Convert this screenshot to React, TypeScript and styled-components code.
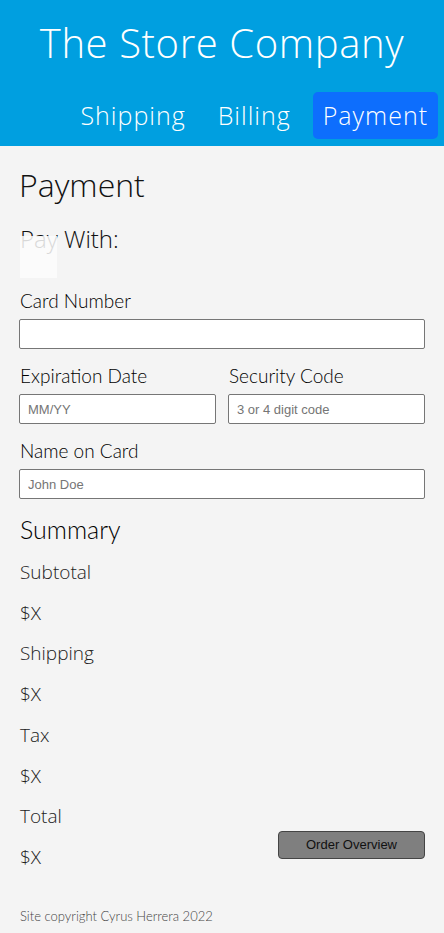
import styled, { createGlobalStyle } from "styled-components";

const GlobalStyle = createGlobalStyle`
  * {
    box-sizing: border-box;
  }
  body {
    margin: 0;
    background-color: #f4f4f4;
    font-family: "Open Sans", "Noto Sans", sans-serif;
    font-weight: 300;
    color: #111;
  }
`;

const summaryRows = [
  { label: "Subtotal", value: "$X" },
  { label: "Shipping", value: "$X" },
  { label: "Tax", value: "$X" },
  { label: "Total", value: "$X" },
];

function App() {
  return (
    <>
      <GlobalStyle />
      <Header>
        <Title>The Store Company</Title>
        <Nav>
          <NavItem>Shipping</NavItem>
          <NavItem>Billing</NavItem>
          <NavItem $active>Payment</NavItem>
        </Nav>
      </Header>
      <Main>
        <PageTitle>Payment</PageTitle>
        <PayWith>
          Pay With:
          <BrokenImage />
        </PayWith>
        <Field>
          <Label>Card Number</Label>
          <Input type="text" />
        </Field>
        <Row>
          <Field>
            <Label>Expiration Date</Label>
            <Input type="text" placeholder="MM/YY" />
          </Field>
          <Field>
            <Label>Security Code</Label>
            <Input type="text" placeholder="3 or 4 digit code" />
          </Field>
        </Row>
        <Field>
          <Label>Name on Card</Label>
          <Input type="text" placeholder="John Doe" />
        </Field>
        <SummaryTitle>Summary</SummaryTitle>
        <SummaryBody>
          <SummaryList>
            {summaryRows.map((row) => (
              <div key={row.label}>
                <SummaryText>{row.label}</SummaryText>
                <SummaryText>{row.value}</SummaryText>
              </div>
            ))}
          </SummaryList>
          <OrderButton type="button">Order Overview</OrderButton>
        </SummaryBody>
        <Footer>Site copyright Cyrus Herrera 2022</Footer>
      </Main>
    </>
  );
}

const Header = styled.header`
  background-color: #009fe0;
  color: #fff;
  height: 146px;
  padding-top: 18px;
`;

const Title = styled.h1`
  margin: 0;
  text-align: center;
  font-size: 40px;
  font-weight: 300;
  line-height: 50px;
  letter-spacing: 0.6px;
`;

const Nav = styled.nav`
  display: flex;
  justify-content: flex-end;
  gap: 12px;
  margin-top: 24px;
  padding-right: 6px;
`;

const NavItem = styled.a<{ $active?: boolean }>`
  display: block;
  padding: 0 10px;
  height: 47px;
  line-height: 46px;
  font-size: 25px;
  font-weight: 300;
  letter-spacing: 1px;
  border-radius: 5px;
  color: #fff;
  background-color: ${(p) => (p.$active ? "#0d6efd" : "transparent")};
`;

const Main = styled.main`
  padding: 0 19px;
`;

const PageTitle = styled.h2`
  margin: 0;
  padding-top: 20px;
  font-size: 32px;
  font-weight: 300;
  line-height: 38px;
`;

const PayWith = styled.h3`
  position: relative;
  margin: 20px 0 0;
  font-size: 24px;
  font-weight: 300;
  line-height: 30px;
  height: 50px;
  padding-left: 1px;
`;

const BrokenImage = styled.span`
  position: absolute;
  left: 1px;
  top: 12px;
  width: 37px;
  height: 42px;
  background-color: rgba(252, 252, 252, 0.85);
`;

const Field = styled.div`
  display: flex;
  flex-direction: column;
  margin-top: 15px;
`;

const Row = styled.div`
  display: grid;
  grid-template-columns: 1fr 1fr;
  gap: 12px;
`;

const Label = styled.label`
  font-family: "Lato", "Liberation Sans", sans-serif;
  font-weight: 300;
  font-size: 19px;
  line-height: 24px;
  padding-left: 1px;
  margin-bottom: 6px;
  color: #000;
`;

const Input = styled.input`
  width: 100%;
  height: 30px;
  border: 1px solid #767676;
  border-radius: 2px;
  background-color: #fff;
  padding: 0 8px;
  font-family: "Liberation Sans", Arial, sans-serif;
  font-size: 13px;
  &::placeholder {
    color: #757575;
  }
`;

const SummaryTitle = styled.h3`
  margin: 15px 0 0;
  padding-left: 1px;
  font-family: "Lato", "Liberation Sans", sans-serif;
  font-size: 25px;
  font-weight: 300;
  line-height: 30px;
  color: #000;
`;

const SummaryBody = styled.div`
  display: flex;
  justify-content: space-between;
  align-items: flex-end;
`;

const SummaryList = styled.div`
  padding-left: 1px;
  padding-top: 2px;
`;

const SummaryText = styled.p`
  margin: 0;
  padding-top: 12px;
  font-size: 19px;
  font-weight: 300;
  line-height: 28.7px;
  color: #222;
`;

const OrderButton = styled.button`
  width: 147px;
  height: 28px;
  margin-bottom: 13px;
  background-color: #7f7f7f;
  border: 1px solid #444;
  border-radius: 4px;
  font-family: "Liberation Sans", Arial, sans-serif;
  font-size: 13px;
  color: #111;
`;

const Footer = styled.footer`
  margin-top: 36px;
  padding-bottom: 8px;
  padding-left: 1px;
  font-family: "Lato", "Liberation Sans", sans-serif;
  font-size: 13px;
  color: #444;
`;

export default App;
